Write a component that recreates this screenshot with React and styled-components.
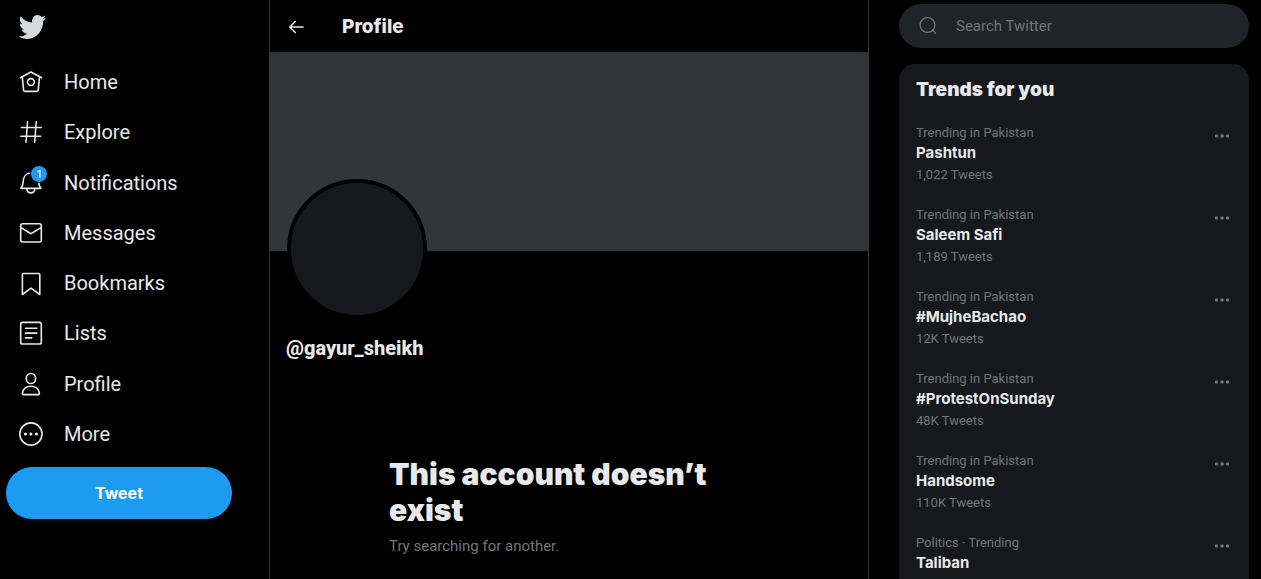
import React from "react";
import styled, { createGlobalStyle } from "styled-components";

const GlobalStyle = createGlobalStyle`
  *, *::before, *::after { box-sizing: border-box; }
  body {
    margin: 0;
    background: #000;
    color: #e7e9ea;
    font-family: Roboto, "Liberation Sans", sans-serif;
    font-size: 15px;
    line-height: 20px;
  }
  h1, h2, p, ul { margin: 0; padding: 0; }
  ul { list-style: none; }
  button { font: inherit; color: inherit; border: 0; padding: 0; background: none; cursor: pointer; }
  a { color: inherit; text-decoration: none; }
  svg { display: block; flex: none; }
`;

const Page = styled.div`
  display: grid;
  grid-template-columns: 269px minmax(0, 1fr) 380px;
  height: 100vh;
  padding-right: 12px;
  overflow: hidden;
`;

const Sidebar = styled.header`
  display: flex;
  flex-direction: column;
`;

const LogoLink = styled.a`
  display: flex;
  align-self: flex-start;
  padding: 15px 18px 18px;
  color: #d6d9db;
`;

const NavList = styled.ul`
  display: flex;
  flex-direction: column;
  height: 402px;
`;

const NavItem = styled.li`
  display: flex;
  flex: 1;
`;

const NavLink = styled.a`
  display: flex;
  align-items: center;
  gap: 20px;
  padding: 0 18px;
  font-size: 20px;
  line-height: 24px;
`;

const IconSlot = styled.span`
  position: relative;
  display: block;
`;

const Badge = styled.span`
  position: absolute;
  top: -5px;
  right: -4px;
  width: 18px;
  height: 18px;
  border: 1px solid #000;
  border-radius: 50%;
  background: #1d9bf0;
  color: #fff;
  font-family: Inter, sans-serif;
  font-size: 11px;
  line-height: 16px;
  text-align: center;
`;

const TweetButton = styled.button`
  height: 52px;
  margin: 8px 37px 0 6px;
  border-radius: 26px;
  background: #1d9bf0;
  color: #fff;
  font-family: Inter, sans-serif;
  font-size: 16px;
  font-weight: 700;
`;

const Main = styled.main`
  border: solid #2f3336;
  border-width: 0 1px;
`;

const TitleBar = styled.div`
  display: flex;
  align-items: center;
  gap: 36px;
  height: 52px;
  padding: 1px 16px 0;
`;

const Title = styled.h1`
  font-family: Inter, sans-serif;
  font-size: 19px;
  line-height: 24px;
  font-weight: 800;
`;

const Banner = styled.div`
  height: 199px;
  background: #333639;
`;

const ProfileHead = styled.section`
  padding: 0 16px;
`;

const Avatar = styled.div`
  position: relative;
  width: 140px;
  height: 140px;
  margin: -72px 0 17px 1px;
  border: 4px solid #000;
  border-radius: 50%;
  background: #16181c;
`;

const Handle = styled.h2`
  font-size: 20px;
  line-height: 24px;
  font-weight: 800;
`;

const EmptyState = styled.section`
  max-width: 360px;
  margin: 96px auto 0;
`;

const EmptyTitle = styled.h2`
  font-family: Inter, sans-serif;
  font-size: 30px;
  line-height: 36px;
  font-weight: 900;
`;

const EmptyText = styled.p`
  margin-top: 8px;
  color: #71767b;
`;

const Aside = styled.aside`
  display: flex;
  flex-direction: column;
  gap: 16px;
  min-height: 0;
  padding: 4px 0 0 30px;
`;

const SearchBox = styled.label`
  display: flex;
  flex: none;
  align-items: center;
  gap: 17px;
  height: 44px;
  padding: 0 18px;
  border-radius: 22px;
  background: #202327;
  color: #71767b;
`;

const SearchInput = styled.input`
  flex: 1;
  min-width: 0;
  padding: 0;
  border: 0;
  outline: 0;
  background: transparent;
  color: #e7e9ea;
  font: inherit;
  &::placeholder { color: #71767b; opacity: 1; }
`;

const TrendsCard = styled.section`
  flex: none;
  padding-bottom: 20px;
  border-radius: 16px;
  background: #16181c;
`;

const TrendsTitle = styled.h2`
  padding: 14px 17px 10px;
  font-family: Inter, sans-serif;
  font-size: 19px;
  line-height: 24px;
  font-weight: 900;
`;

const Trend = styled.li`
  display: flex;
  justify-content: space-between;
  align-items: flex-start;
  padding: 13px 17px 11px;
`;

const TrendText = styled.a`
  display: flex;
  flex-direction: column;
`;

const TrendMeta = styled.span`
  color: #71767b;
  font-size: 13px;
  line-height: 16px;
`;

const TrendName = styled.span`
  margin: 2px 0 4px;
  font-family: Inter, sans-serif;
  font-weight: 700;
`;

const MoreButton = styled.button`
  display: flex;
  margin-top: 1px;
  color: #71767b;
`;

const Icon = ({ children, size = 26, box = 26 }) => (
  <svg
    width={size}
    height={size}
    viewBox={`0 0 ${box} ${box}`}
    fill="none"
    stroke="currentColor"
    strokeWidth="1.6"
    strokeLinejoin="round"
    strokeLinecap="round"
    aria-hidden="true"
  >
    {children}
  </svg>
);

const dots = (xs, y, r) =>
  xs.map((x) => <circle key={x} cx={x} cy={y} r={r} fill="currentColor" stroke="none" />);

const NAV = [
  {
    label: "Home",
    icon: (
      <>
        <path d="M2.3 8.8 12.9 3 23.5 8.8" />
        <path d="M4.3 8.2 5.6 21.2c.1.8.6 1.2 1.3 1.2h12c.7 0 1.2-.4 1.3-1.2L21.5 8.2" />
        <circle cx="12.9" cy="13" r="3.4" />
      </>
    ),
  },
  {
    label: "Explore",
    icon: <path d="M9.5 2.7 8 23.3M18.2 2.7 16.7 23.3M3.4 8.5h19.8M2.8 17.2h19.8" />,
  },
  {
    label: "Notifications",
    badge: "1",
    icon: (
      <>
        <path d="M2.9 18.4h20c-1.6-1.6-2.2-3.6-2.3-6.8-.1-5-3-8.6-7.7-8.6s-7.6 3.6-7.7 8.6c-.1 3.2-.7 5.2-2.3 6.8z" />
        <path d="M8.9 18.6c.2 2.7 1.8 4.3 4 4.3s3.8-1.6 4-4.3" />
      </>
    ),
  },
  {
    label: "Messages",
    icon: (
      <>
        <rect x="2.7" y="3.7" width="20.6" height="18.3" rx="2" />
        <path d="M3 7.6 12.9 13.8 23 7.6" />
      </>
    ),
  },
  {
    label: "Bookmarks",
    icon: <path d="M4.4 24.5V4.5c0-.6.4-1 1-1h15.4c.6 0 1 .4 1 1v20L13 18.2z" />,
  },
  {
    label: "Lists",
    icon: (
      <>
        <rect x="2.7" y="2.4" width="20.6" height="21.6" rx="1.8" />
        <path d="M7.5 8.3h11.3M7.5 13.1h11.3M7.5 17.9h6.3" />
      </>
    ),
  },
  {
    label: "Profile",
    icon: (
      <>
        <rect x="8.3" y="2.5" width="9.2" height="10" rx="4.5" />
        <path d="M5.5 23.6c-.8 0-1.2-.6-1.1-1.3.7-4.3 3.9-7 8.5-7s7.8 2.7 8.5 7c.1.7-.3 1.3-1.1 1.3z" />
      </>
    ),
  },
  {
    label: "More",
    icon: (
      <>
        <circle cx="12.9" cy="13" r="11.1" />
        {dots([7.4, 12.9, 18.4], 13, 1.6)}
      </>
    ),
  },
];

const TRENDS = [
  ["Trending in Pakistan", "Pashtun", "1,022 Tweets"],
  ["Trending in Pakistan", "Saleem Safi", "1,189 Tweets"],
  ["Trending in Pakistan", "#MujheBachao", "12K Tweets"],
  ["Trending in Pakistan", "#ProtestOnSunday", "48K Tweets"],
  ["Trending in Pakistan", "Handsome", "110K Tweets"],
  ["Politics · Trending", "Taliban", ""],
];

const BirdLogo = () => (
  <svg width="28" height="24" viewBox="0.3 2.7 23.4 18.6" preserveAspectRatio="none" fill="currentColor" aria-hidden="true">
    <path d="M23.643 4.937c-.835.37-1.732.62-2.675.733.962-.576 1.7-1.49 2.048-2.578-.9.534-1.897.922-2.958 1.13-.85-.904-2.06-1.47-3.4-1.47-2.572 0-4.658 2.086-4.658 4.66 0 .364.042.718.12 1.06-3.873-.195-7.304-2.05-9.602-4.868-.4.69-.63 1.49-.63 2.342 0 1.616.823 3.043 2.072 3.878-.764-.025-1.482-.234-2.11-.583v.06c0 2.257 1.605 4.14 3.737 4.568-.392.106-.803.162-1.227.162-.3 0-.593-.028-.877-.082.593 1.85 2.313 3.198 4.352 3.234-1.595 1.25-3.604 1.995-5.786 1.995-.376 0-.747-.022-1.112-.065 2.062 1.323 4.51 2.093 7.14 2.093 8.57 0 13.255-7.098 13.255-13.254 0-.2-.005-.402-.014-.602.91-.658 1.7-1.477 2.323-2.41z" />
  </svg>
);

export default function App() {
  return (
    <>
      <GlobalStyle />
      <Page>
        <Sidebar>
          <LogoLink href="#home" aria-label="Twitter">
            <BirdLogo />
          </LogoLink>
          <nav>
            <NavList>
              {NAV.map(({ label, icon, badge }) => (
                <NavItem key={label}>
                  <NavLink href={`#${label.toLowerCase()}`}>
                    <IconSlot>
                      <Icon>{icon}</Icon>
                      {badge && <Badge>{badge}</Badge>}
                    </IconSlot>
                    {label}
                  </NavLink>
                </NavItem>
              ))}
            </NavList>
          </nav>
          <TweetButton type="button">Tweet</TweetButton>
        </Sidebar>

        <Main>
          <TitleBar>
            <button type="button" aria-label="Back">
              <Icon size={20} box={20}>
                <path d="M17 10H4M9.3 4.5 3.8 10l5.5 5.5" />
              </Icon>
            </button>
            <Title>Profile</Title>
          </TitleBar>
          <Banner />
          <ProfileHead>
            <Avatar />
            <Handle>@gayur_sheikh</Handle>
          </ProfileHead>
          <EmptyState>
            <EmptyTitle>This account doesn’t exist</EmptyTitle>
            <EmptyText>Try searching for another.</EmptyText>
          </EmptyState>
        </Main>

        <Aside>
          <SearchBox>
            <Icon size={22} box={22}>
              <g strokeWidth="1.3">
                <circle cx="10.5" cy="10" r="7.4" />
                <path d="M15.8 15.2 18.5 18.2" />
              </g>
            </Icon>
            <SearchInput type="text" placeholder="Search Twitter" aria-label="Search Twitter" />
          </SearchBox>
          <TrendsCard>
            <TrendsTitle>Trends for you</TrendsTitle>
            <ul>
              {TRENDS.map(([meta, name, count]) => (
                <Trend key={name}>
                  <TrendText href="#trend">
                    <TrendMeta>{meta}</TrendMeta>
                    <TrendName>{name}</TrendName>
                    {count && <TrendMeta>{count}</TrendMeta>}
                  </TrendText>
                  <MoreButton type="button" aria-label={`More about ${name}`}>
                    <Icon size={20} box={20}>{dots([4.5, 10, 15.5], 10, 1.7)}</Icon>
                  </MoreButton>
                </Trend>
              ))}
            </ul>
          </TrendsCard>
        </Aside>
      </Page>
    </>
  );
}
